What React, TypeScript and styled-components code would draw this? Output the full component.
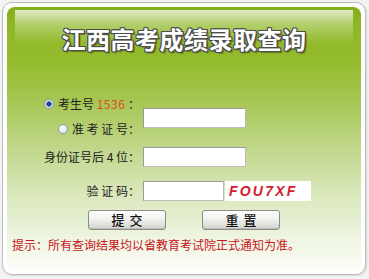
import styled, { createGlobalStyle } from "styled-components";

const GlobalStyle = createGlobalStyle`
  html, body {
    margin: 0;
    padding: 0;
    background: #f3f3f3;
  }
  body {
    font-family: "Noto Sans CJK SC", "Noto Sans", sans-serif;
    font-size: 12px;
    color: #222;
  }
`;

const Frame = styled.div`
  box-sizing: border-box;
  margin: 2px;
  width: 364px;
  height: 273px;
  padding: 4px;
  background: #fff;
  border: 1px solid #bcbcbc;
  border-radius: 10px;
  box-shadow: 1px 1px 2px rgba(0, 0, 0, 0.12);
`;

const Panel = styled.div`
  height: 100%;
  border-radius: 8px 8px 6px 6px;
  background: linear-gradient(
    to bottom,
    #84ae1c 0%,
    #8fb827 8%,
    #94bb2c 20%,
    #a5c651 35%,
    #c1d78b 54%,
    #dce9c0 73%,
    #eef5e1 88%,
    #fbfdf7 100%
  );
  overflow: hidden;
`;

const Header = styled.div`
  box-sizing: border-box;
  height: 63px;
  padding-top: 17px;
  text-align: center;
  background: linear-gradient(
      to bottom,
      rgba(255, 255, 255, 0.75),
      rgba(255, 255, 255, 0.3) 45%,
      rgba(255, 255, 255, 0)
    )
    no-repeat 8px 3px / calc(100% - 16px) 34px;
`;

const Title = styled.h1`
  margin: 0;
  font-size: 24px;
  line-height: 30px;
  font-weight: 700;
  letter-spacing: 0.5px;
  color: #fff;
  text-shadow: 1px 0 0 #4d4d4d, -1px 0 0 #4d4d4d, 0 1px 0 #4d4d4d,
    0 -1px 0 #4d4d4d, 1px 1px 0 #4d4d4d, -1px -1px 0 #4d4d4d,
    1px -1px 0 #4d4d4d, -1px 1px 0 #4d4d4d, 2px 2px 1px rgba(0, 0, 0, 0.35);
`;

const Form = styled.form`
  margin: 21px 0 0;
`;

const Row = styled.div<{ $top: number; $height: number }>`
  display: grid;
  grid-template-columns: 133px auto;
  column-gap: 3px;
  align-items: center;
  height: ${(p) => p.$height}px;
  margin-top: ${(p) => p.$top}px;
`;

const Label = styled.label`
  justify-self: end;
  white-space: pre;
  line-height: 25px;
`;

const RadioStack = styled.div`
  display: flex;
  flex-direction: column;
  align-items: flex-end;
`;

const RadioLabel = styled.label`
  display: flex;
  align-items: center;
  gap: 4px;
  height: 25px;
  white-space: pre;
`;

const Radio = styled.input.attrs({ type: "radio", name: "kind" })`
  appearance: none;
  box-sizing: border-box;
  width: 10px;
  height: 10px;
  margin: 0;
  border-radius: 50%;
  border: 1px solid #8a98a8;
  background: radial-gradient(circle at 40% 35%, #ffffff, #d3dae2);
  &:checked {
    background: radial-gradient(circle, #1b4d95 0 2.4px, #e8eef4 3px);
  }
`;

const Num = styled.span`
  color: #e2461b;
  letter-spacing: 0.5px;
`;

const Field = styled.input<{ $width: number }>`
  box-sizing: border-box;
  width: ${(p) => p.$width}px;
  height: 20px;
  margin: 0;
  padding: 0 3px;
  border: 1px solid #bdbdbd;
  border-top-color: #9a9a9a;
  border-left-color: #9a9a9a;
  background: #fff;
  font: inherit;
  outline: none;
`;

const CaptchaCell = styled.div`
  display: flex;
  align-items: center;
  gap: 1px;
`;

const Captcha = styled.span`
  box-sizing: border-box;
  display: inline-block;
  width: 86px;
  height: 20px;
  padding-left: 4px;
  background: #fff;
  color: #d3202c;
  font-family: "Liberation Sans", Arial, sans-serif;
  font-size: 14px;
  line-height: 20px;
  font-weight: 700;
  font-style: italic;
  letter-spacing: 2.2px;
`;

const Buttons = styled.div`
  display: flex;
  gap: 36px;
  margin-top: 7px;
  padding-left: 81px;
`;

const Button = styled.button`
  box-sizing: border-box;
  width: 78px;
  height: 20px;
  padding: 0;
  border: 1px solid #8c8c8c;
  border-radius: 3px;
  background: linear-gradient(to bottom, #ffffff, #f1f1ef 45%, #d3d3cf);
  box-shadow: inset 0 -1px 0 #bdbdb8;
  color: #111;
  font-family: "Noto Sans CJK SC", sans-serif;
  font-size: 13px;
  font-weight: 500;
  line-height: 18px;
  letter-spacing: 5px;
  text-indent: 5px;
`;

const Tip = styled.p`
  margin: 7px 0 0;
  padding-left: 5px;
  color: #c8141c;
  font-size: 12px;
  line-height: 16px;
`;

export default function App() {
  return (
    <>
      <GlobalStyle />
      <Frame>
        <Panel>
          <Header>
            <Title>江西高考成绩录取查询</Title>
          </Header>
          <Form onSubmit={(e) => e.preventDefault()}>
            <Row $top={0} $height={50}>
              <RadioStack>
                <RadioLabel>
                  <Radio defaultChecked />
                  <span>
                    考生号 <Num>1536</Num> ：
                  </span>
                </RadioLabel>
                <RadioLabel>
                  <Radio />
                  <span>准 考 证 号：</span>
                </RadioLabel>
              </RadioStack>
              <Field $width={103} style={{ marginTop: 3 }} />
            </Row>
            <Row $top={3} $height={25}>
              <Label>身份证号后 4 位：</Label>
              <Field $width={103} />
            </Row>
            <Row $top={9} $height={25}>
              <Label>验 证 码：</Label>
              <CaptchaCell>
                <Field $width={81} />
                <Captcha>FOU7XF</Captcha>
              </CaptchaCell>
            </Row>
            <Buttons>
              <Button type="submit">提交</Button>
              <Button type="reset">重置</Button>
            </Buttons>
            <Tip>提示：所有查询结果均以省教育考试院正式通知为准。</Tip>
          </Form>
        </Panel>
      </Frame>
    </>
  );
}
